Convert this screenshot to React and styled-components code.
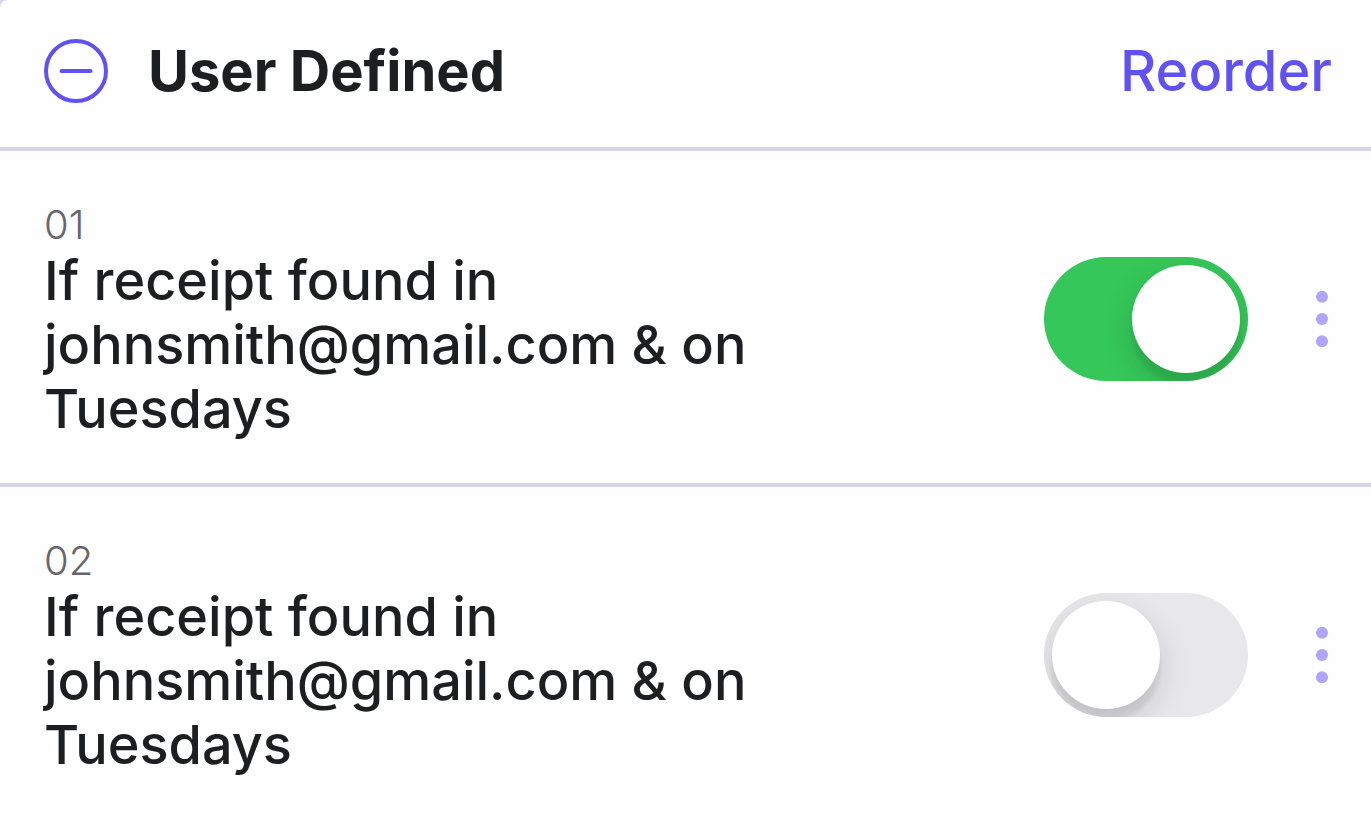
import React, { useState } from "react";
import styled, { createGlobalStyle } from "styled-components";

const GlobalStyle = createGlobalStyle`
  body {
    margin: 0;
    background: #ddd6ee;
    color: #1d1e20;
    font-family: Inter, "Liberation Sans", sans-serif;
  }
`;

const Panel = styled.main`
  min-height: 100vh;
  background: #fefefe;
  border-top-left-radius: 8px;
`;

const Header = styled.header`
  display: flex;
  align-items: center;
  gap: 40px;
  padding: 35px 39px 40px 44px;
  border-bottom: 4px solid #dad5ec;
`;

const PlainButton = styled.button`
  display: flex;
  padding: 0;
  border: 0;
  background: none;
  color: #6052f2;
  font: inherit;
  cursor: pointer;
`;

const Title = styled.h1`
  flex: 1;
  margin: 0;
  font-size: 56px;
  font-weight: 700;
  line-height: 72px;
`;

const ReorderButton = styled(PlainButton)`
  font-size: 56px;
  font-weight: 500;
  line-height: 72px;
`;

const RuleList = styled.ul`
  margin: 0;
  padding: 0;
  list-style: none;
`;

const Rule = styled.li`
  display: flex;
  align-items: center;
  padding: 46px 39px 42px 44px;
  & + & {
    border-top: 4px solid #dad5ec;
  }
`;

const RuleLabel = styled.label`
  flex: 1;
  margin-right: 240px;
  padding-top: 4px;
`;

const RuleNumber = styled.span`
  display: block;
  color: #66666c;
  font-size: 40px;
  font-weight: 300;
  line-height: 48px;
`;

const RuleText = styled.span`
  display: block;
  font-size: 54px;
  font-weight: 500;
  line-height: 64px;
`;

const Toggle = styled.input`
  appearance: none;
  flex-shrink: 0;
  box-sizing: border-box;
  width: 204px;
  height: 124px;
  margin: 0;
  padding: 8px;
  border-radius: 62px;
  background: #e8e8ea;
  overflow: hidden;
  cursor: pointer;
  &::before {
    content: "";
    display: block;
    width: 108px;
    height: 108px;
    border-radius: 50%;
    background: #fff;
    box-shadow: 0 12px 32px rgba(0, 0, 0, 0.15),
      0 12px 4px rgba(0, 0, 0, 0.06);
  }
  &:checked {
    background: #35c759;
  }
  &:checked::before {
    margin-left: 80px;
  }
`;

const MenuButton = styled(PlainButton)`
  margin-left: 64px;
  color: #b0a5f8;
`;

const MinusIcon = () => (
  <svg width="64" height="64" viewBox="0 0 64 64" fill="none" stroke="currentColor" strokeWidth="4">
    <circle cx="32" cy="32" r="30" />
    <path d="M17.5 32h29" strokeLinecap="round" />
  </svg>
);

const DotsIcon = () => (
  <svg width="20" height="64" viewBox="0 0 20 64" fill="currentColor">
    <circle cx="10" cy="9.7" r="6" />
    <circle cx="10" cy="32" r="6" />
    <circle cx="10" cy="54.3" r="6" />
  </svg>
);

const initialRules = [
  { id: "01", text: "If receipt found in johnsmith@gmail.com & on Tuesdays", enabled: true },
  { id: "02", text: "If receipt found in johnsmith@gmail.com & on Tuesdays", enabled: false },
];

export default function App() {
  const [rules, setRules] = useState(initialRules);

  const toggleRule = id =>
    setRules(rules.map(rule => (rule.id === id ? { ...rule, enabled: !rule.enabled } : rule)));

  return (
    <Panel>
      <GlobalStyle />
      <Header>
        <PlainButton type="button" aria-label="Collapse">
          <MinusIcon />
        </PlainButton>
        <Title>User Defined</Title>
        <ReorderButton type="button">Reorder</ReorderButton>
      </Header>
      <RuleList>
        {rules.map(({ id, text, enabled }) => (
          <Rule key={id}>
            <RuleLabel htmlFor={`rule-${id}`}>
              <RuleNumber>{id}</RuleNumber>
              <RuleText>{text}</RuleText>
            </RuleLabel>
            <Toggle
              type="checkbox"
              id={`rule-${id}`}
              checked={enabled}
              onChange={() => toggleRule(id)}
            />
            <MenuButton type="button" aria-label={`Options for rule ${id}`}>
              <DotsIcon />
            </MenuButton>
          </Rule>
        ))}
      </RuleList>
    </Panel>
  );
}
